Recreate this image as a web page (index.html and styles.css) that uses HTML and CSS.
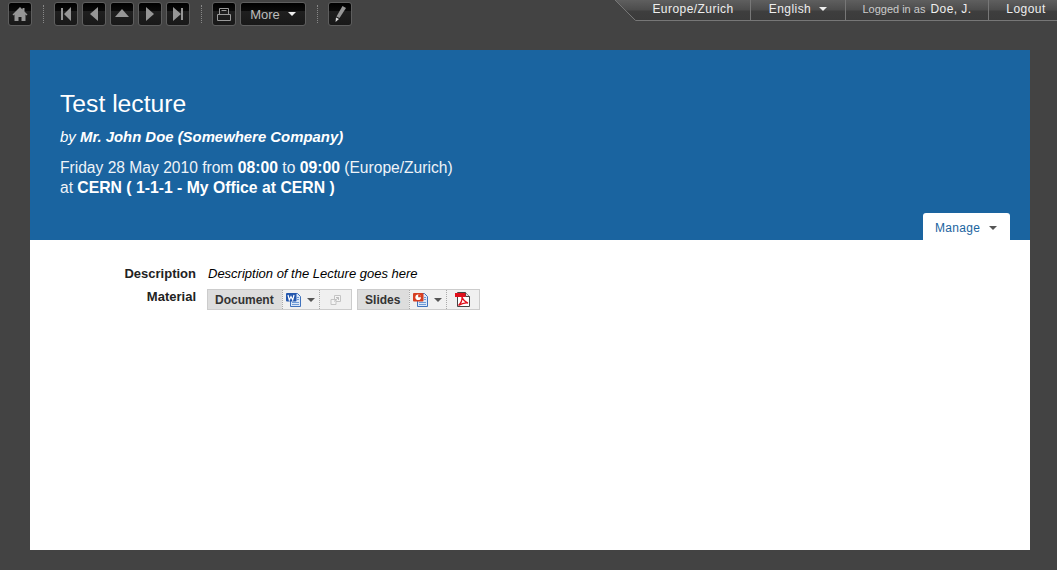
FILE: index.html
```html
<!DOCTYPE html>
<html lang="en">
<head>
<meta charset="utf-8">
<title>Test lecture</title>
<link rel="stylesheet" href="styles.css">
</head>
<body>
<header class="topbar">
  <nav class="tools">
    <a class="btn"><svg width="22" height="22" viewBox="0 0 22 22"><path class="ic" d="M11 4 3.500 11.500 4.500 12.500l1-.9V18h4v-4h3v4h4v-6.400l1 .9 1-1L15.500 8.500V5h-2v1.500z"/></svg></a>
    <span class="sep"></span>
    <div class="group">
      <a class="btn"><svg width="22" height="22" viewBox="0 0 22 22"><path class="ic" d="M6 5h2v12H6zM16 4v14L9 11z"/></svg></a>
      <a class="btn"><svg width="22" height="22" viewBox="0 0 22 22"><path class="ic" d="M15 4v14L7 11z"/></svg></a>
      <a class="btn"><svg width="22" height="22" viewBox="0 0 22 22"><path class="ic" d="M11 6l7 8H4z"/></svg></a>
      <a class="btn"><svg width="22" height="22" viewBox="0 0 22 22"><path class="ic" d="M7 4l8 7-8 7z"/></svg></a>
      <a class="btn"><svg width="22" height="22" viewBox="0 0 22 22"><path class="ic" d="M6 4l8 7-8 7zM14 5h2v12h-2z"/></svg></a>
    </div>
    <span class="sep"></span>
    <div class="group">
      <a class="btn"><svg width="22" height="22" viewBox="0 0 22 22"><path class="ic-line" d="M6.500 5.500h9v6h-9zM8.500 7.500h5M4.500 11.500h13v6h-13z"/></svg></a>
      <a class="btn btn-more">More<i class="caret caret-w"></i></a>
    </div>
    <span class="sep"></span>
    <a class="btn"><svg width="22" height="22" viewBox="0 0 22 22"><path class="ic" d="M13.500 3 17 5 10.500 15 7.500 13.500z"/><path class="ic-tip" d="M7 14.500 10 16 6.500 19z"/></svg></a>
  </nav>
  <div class="session">
    <svg class="corner" width="21" height="21" viewBox="0 0 21 21"><defs><linearGradient id="g" x1="0" y1="0" x2="0" y2="1"><stop offset="0" stop-color="#5f5f5f"/><stop offset=".5" stop-color="#4c4c4c"/><stop offset=".55" stop-color="#3e3e3e"/><stop offset="1" stop-color="#3b3b3b"/></linearGradient></defs><path d="M0 0h21v20H21z" fill="url(#g)"/><path d="M0 0 20.500 20.500H21" fill="none" stroke="#777"/></svg>
    <a class="cell cell-tz">Europe/Zurich</a>
    <a class="cell cell-lang">English<i class="caret caret-w"></i></a>
    <span class="cell cell-user"><small>Logged in as</small>Doe, J.</span>
    <a class="cell cell-out">Logout</a>
  </div>
</header>
<main class="page">
  <section class="hero">
    <h1>Test lecture</h1>
    <p class="by"><em>by</em> <b>Mr. John Doe (Somewhere Company)</b></p>
    <p class="when">Friday 28 May 2010 from <b>08:00</b> to <b>09:00</b> (Europe/Zurich)<br>at <b>CERN ( 1-1-1 - My Office at CERN )</b></p>
    <div class="tabrow"><a class="tab">Manage<i class="caret caret-d"></i></a></div>
  </section>
  <section class="details">
    <div class="label">Description</div>
    <div class="desc">Description of the Lecture goes here</div>
    <div class="label">Material</div>
    <div class="mats">
      <div class="mat">
        <span class="mat-name">Document</span>
        <span class="mat-act"><svg width="16" height="16" viewBox="0 0 16 16"><path d="M4.500 1.500h7l3 3v10h-10z" fill="#dce8f8" stroke="#3f72bd"/><path d="M6 10.500h7M6 12.500h7" stroke="#6f9bd6"/><path d="M11 7.500h2M11 5.500h2" stroke="#6f9bd6"/><rect x="0" y="1" width="10.500" height="8.500" rx="1" fill="#2457ad"/><path d="M2 3l1.300 5 1.700-3.500L6.700 8 8 3" fill="none" stroke="#fff" stroke-width="1.200"/></svg><i class="caret caret-g"></i></span>
        <span class="mat-act mat-last"><svg width="15" height="14" viewBox="0 0 15 14"><path d="M6.500 2.500h6v6h-6z" fill="#f4f4f4" stroke="#c4c4c4"/><path d="M3 6.500h5v5H3z" fill="#f4f4f4" stroke="#c4c4c4"/><path d="M6 8.500 10.500 4.500M8 4.500h2.500V7" fill="none" stroke="#bdbdbd"/></svg></span>
      </div>
      <div class="mat">
        <span class="mat-name">Slides</span>
        <span class="mat-act"><svg width="16" height="16" viewBox="0 0 16 16"><path d="M4.500 1.500h7l3 3v10h-10z" fill="#dce8f8" stroke="#3f72bd"/><path d="M6 10.500h7M6 12.500h7M11 7.500h2M11 5.500h2" stroke="#6f9bd6"/><rect x="0" y="1" width="10.500" height="8.500" rx="1" fill="#d63f22"/><circle cx="5.200" cy="5.200" r="2.800" fill="#fff"/><path d="M5.200 5.200V2.400A2.800 2.800 0 0 1 8 5.200z" fill="#d63f22"/></svg><i class="caret caret-g"></i></span>
        <span class="mat-act mat-last"><svg width="16" height="17" viewBox="0 0 16 17"><path d="M2.500 1.500h8l4 4v10h-12z" fill="#fff" stroke="#444"/><path d="M10.500 1.500v4h4" fill="#ddd" stroke="#444"/><rect x="0" y="2" width="10.500" height="4" fill="#e0101c"/><path d="M7 6c.5 4-1 6-3.500 8.500 3-2 6-3 9.500-2.500-2.500-1-5-3-6-6z" fill="none" stroke="#e0101c" stroke-width="1.300"/></svg></span>
      </div>
    </div>
  </section>
</main>
</body>
</html>
```
FILE: styles.css
```css
html, body { height: 100%; }
body { margin: 0; background: #434343; font-family: "Liberation Sans", Arial, sans-serif; color: #000; overflow: hidden; }
a { color: inherit; text-decoration: none; }
.topbar { display: flex; justify-content: space-between; align-items: flex-start; height: 50px; }
.tools { display: flex; align-items: center; padding: 2px 0 0 8px; }
.group { display: flex; gap: 4px; }
.sep { width: 0; height: 18px; margin: 0 10px 0 11px; border-left: 1px dotted #888; }
.btn { box-sizing: border-box; width: 24px; height: 24px; display: flex; align-items: center; justify-content: center; border: 1px solid #5e5e5e; border-radius: 3px; background: linear-gradient(#000 0, #0a0a0a 35%, #1f1f1f 38%, #181818 100%); color: #bbb; font-size: 13px; }
.btn-more { width: 66px; gap: 8px; }
.ic { fill: #969696; }
.ic-line { fill: none; stroke: #9a9a9a; }
.ic-tip { fill: #ddd; }
.caret { display: inline-block; width: 0; height: 0; border-style: solid; border-width: 4px 4.5px 0; border-color: transparent; }
.caret-w { border-top-color: #eee; }
.caret-d { border-top-color: #555; margin-left: 9px; vertical-align: 2px; }
.caret-g { border-top-color: #555; margin-left: 5px; }
.session { display: flex; height: 21px; color: #eee; font-size: 12px; letter-spacing: .45px; }
.corner { display: block; flex: none; }
.cell { box-sizing: border-box; height: 21px; display: flex; align-items: center; justify-content: center; gap: 8px; background: linear-gradient(#5f5f5f 0, #4c4c4c 50%, #3e3e3e 55%, #3b3b3b 100%); border-bottom: 1px solid #777; border-right: 1px solid #777; padding-bottom: 3px; }
.cell-tz { width: 115px; }
.cell-lang { width: 95px; }
.cell-user { width: 143px; gap: 5px; }
.cell-out { width: 68px; border-right: 0; padding-left: 6px; }
small { font-size: 11px; letter-spacing: 0; color: #ccc; }
.page { box-sizing: border-box; width: 1000px; height: 500px; margin-left: 30px; background: #fff; }
.hero { box-sizing: border-box; height: 190px; background: #1a64a0; color: #fff; padding: 40px 20px 0 30px; display: flex; flex-direction: column; }
h1 { margin: 0; font-size: 24.7px; font-weight: 400; line-height: 27px; }
.by { margin: 11px 0 0; font-size: 15px; line-height: 18px; font-style: italic; }
.by b { font-size: 14.9px; }
.when { margin: 12px 0 0; font-size: 15.6px; line-height: 20px; color: #eef3f8; }
.when b { font-weight: 700; font-size: 15.75px; color: #fff; }
.tabrow { margin-top: auto; display: flex; justify-content: flex-end; }
.tab { box-sizing: border-box; width: 87px; height: 27px; padding: 8px 0 0 12px; background: #fff; border-radius: 3px 3px 0 0; color: #1a64a0; font-size: 12px; letter-spacing: .3px; }
.details { display: grid; grid-template-columns: 166px 1fr; column-gap: 11px; row-gap: 7px; padding-top: 26px; font-size: 12px; }
.label { text-align: right; font-weight: 700; font-size: 13px; line-height: 16px; color: #222; }
.desc { font-style: italic; font-size: 13px; line-height: 16px; padding-left: 1px; }
.mats { display: flex; gap: 5px; }
.mat { box-sizing: border-box; height: 21px; display: flex; align-items: stretch; border: 1px solid #ccc; background: #f0f0f0; }
.mat-name { display: flex; align-items: center; padding: 0 8.4px 0 7px; background: #ddd; font-weight: 700; color: #333; font-size: 12px; }
.mat-act { box-sizing: border-box; width: 37px; display: flex; align-items: center; padding: 0 0 0 3px; border-left: 1px dotted #aaa; }
.mat-last { width: auto; padding: 0 8px; }
```
